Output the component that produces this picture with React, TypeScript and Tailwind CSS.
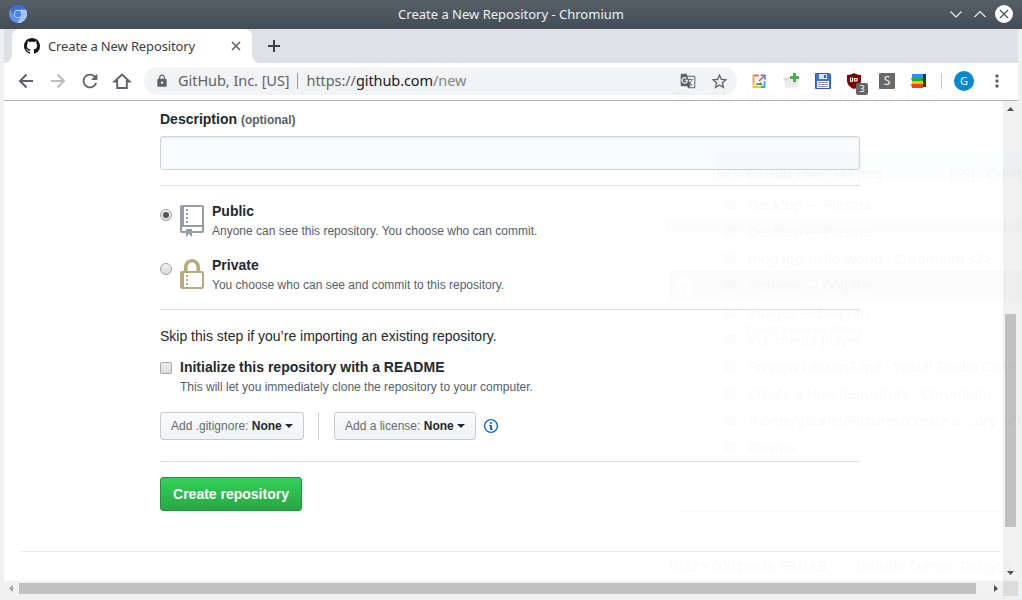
import React from "react";
import { MdRefresh, MdLock, MdStarBorder, MdMoreVert, MdGTranslate } from "react-icons/md";

const markPath =
  "M8 0C3.58 0 0 3.58 0 8c0 3.54 2.29 6.53 5.47 7.59.4.07.55-.17.55-.38 0-.19-.01-.82-.01-1.49-2.01.37-2.53-.49-2.69-.94-.09-.23-.48-.94-.82-1.13-.28-.15-.68-.52-.01-.53.63-.01 1.08.58 1.23.82.72 1.21 1.87.87 2.33.66.07-.52.28-.87.51-1.07-1.78-.2-3.64-.89-3.64-3.95 0-.87.31-1.59.82-2.15-.08-.2-.36-1.02.08-2.12 0 0 .67-.21 2.2.82.64-.18 1.32-.27 2-.27.68 0 1.36.09 2 .27 1.53-1.04 2.2-.82 2.2-.82.44 1.1.16 1.92.08 2.12.51.56.82 1.27.82 2.15 0 3.07-1.87 3.75-3.65 3.95.29.25.54.73.54 1.48 0 1.07-.01 1.93-.01 2.2 0 .21.15.46.55.38A8.013 8.013 0 0 0 16 8c0-4.42-3.58-8-8-8z";
const repoPath =
  "M4 9H3V8h1v1zm0-3H3v1h1V6zm0-2H3v1h1V4zm0-2H3v1h1V2zm8-1v12c0 .55-.45 1-1 1H6v2l-1.5-1.5L3 16v-2H1c-.55 0-1-.45-1-1V1c0-.55.45-1 1-1h10c.55 0 1 .45 1 1zm-1 10H1v2h2v-1h3v1h5v-2zm0-10H2v9h9V1z";
const lockPath =
  "M4 13H3v-1h1v1zm8-6v7c0 .55-.45 1-1 1H1c-.55 0-1-.45-1-1V7c0-.55.45-1 1-1h1V4c0-2.2 1.8-4 4-4s4 1.8 4 4v2h1c.55 0 1 .45 1 1zM3.8 6h4.41V4c0-1.22-.98-2.2-2.2-2.2-1.22 0-2.2.98-2.2 2.2v2H3.8zM11 7H2v7h9V7zM4 8H3v1h1V8zm0 2H3v1h1v-1z";
const infoPath =
  "M6.3 5.69a.942.942 0 0 1-.28-.7c0-.28.09-.52.28-.7.19-.18.42-.28.7-.28.28 0 .52.09.7.28.18.19.28.42.28.7 0 .28-.09.52-.28.7a1 1 0 0 1-.7.3c-.28 0-.52-.11-.7-.3zM8 7.99c-.02-.25-.11-.48-.31-.69-.2-.19-.42-.3-.69-.31H6c-.27.02-.48.13-.69.31-.2.2-.3.44-.31.69h1v3c.02.27.11.5.31.69.2.2.42.31.69.31h1c.27 0 .48-.11.69-.31.2-.19.3-.42.31-.69H8V7.98v.01zM7 2.3c-3.14 0-5.7 2.54-5.7 5.68 0 3.14 2.56 5.7 5.7 5.7s5.7-2.55 5.7-5.7c0-3.15-2.56-5.69-5.7-5.69v.01zM7 .98c3.86 0 7 3.14 7 7s-3.14 7-7 7-7-3.12-7-7 3.14-7 7-7z";

function TitleBar() {
  return (
    <header className="flex h-[29px] shrink-0 items-center bg-linear-to-b from-[#566069] to-[#444c54] pr-[9px] pb-px pl-[9px] text-[#eff0f1]">
      <svg width="18" height="18" viewBox="0 0 18 18">
        <circle cx="9" cy="9" r="9" fill="#5b93f5" />
        <path d="M1.200 4.500A9 9 0 0 1 16.800 4.600L9 4.800 5.200 10.600z" fill="#3e6fd0" />
        <path d="M16.900 4.800A9 9 0 0 1 8.200 18L12.700 10.600 11.500 4.800z" fill="#a5c6fb" />
        <circle cx="9" cy="8.900" r="4.100" fill="#c3d9fc" />
        <circle cx="9" cy="8.900" r="3.200" fill="#4a83ee" />
      </svg>
      <h1 className="flex-1 pl-[46px] text-center text-[13px] leading-[20px]">Create a New Repository - Chromium</h1>
      <svg width="64" height="18" viewBox="0 0 64 18" fill="none">
        <path d="M1.500 6.500l5.500 5.500 5.500-5.500M25.500 12l5.500-5.500 5.500 5.500" stroke="#eff0f1" strokeWidth="1.100" />
        <circle cx="55" cy="9" r="9" fill="#fcfcfc" />
        <path d="M51 5l8 8M59 5l-8 8" stroke="#475057" strokeWidth="1.200" />
      </svg>
    </header>
  );
}

function TabStrip() {
  return (
    <div className="flex h-[34px] shrink-0 bg-[#dee1e6]">
      <div className="w-[8px] bg-white">
        <div className="h-full rounded-br-[8px] bg-[#dee1e6]" />
      </div>
      <div className="flex w-[240px] items-center rounded-t-[8px] bg-white pl-[12px] pr-[11px]">
        <svg width="16" height="16" viewBox="0 0 16 16" fill="#191717">
          <path d={markPath} />
        </svg>
        <span className="mt-px ml-[8px] flex-1 whitespace-nowrap text-[13px] tracking-[-0.13px] text-[#3c4043]">Create a New Repository</span>
        <svg width="10" height="10" viewBox="0 0 10 10" stroke="#5f6368" strokeWidth="1.600">
          <path d="M1 1l8 8M9 1L1 9" />
        </svg>
      </div>
      <div className="w-[8px] bg-white">
        <div className="h-full rounded-bl-[8px] bg-[#dee1e6]" />
      </div>
      <svg className="mt-[11px] ml-[8px]" width="12" height="12" viewBox="0 0 12 12" stroke="#3c4043" strokeWidth="2">
        <path d="M6 0v12M0 6h12" />
      </svg>
    </div>
  );
}

function Extensions() {
  return (
    <div className="flex items-center gap-[16px]">
      <svg width="16" height="16" viewBox="0 0 16 16" fill="none" strokeWidth="1.800">
        <path d="M8 2.500H2.500" stroke="#ea6a5e" />
        <path d="M2.500 1.600V10" stroke="#f4a13d" />
        <path d="M2.500 9.500v4.500H7" stroke="#fbc02d" />
        <path d="M6 14h5" stroke="#e6c33a" />
        <path d="M10 14h3.500V8" stroke="#42a5e0" />
        <path d="M8 8l5-5" stroke="#ea5548" strokeWidth="1.600" />
        <path d="M9.500 2.300h4.500v4.500" stroke="#4285f4" strokeWidth="1.600" />
        <path d="M4.500 12l2-2.500 1.500 1 1.500-1.500 2.500 3z" fill="#34a853" />
      </svg>
      <svg width="16" height="16" viewBox="0 0 16 16">
        <path d="M1 6l4-2 10 3v7L2 15z" fill="#ebebeb" />
        <path d="M0 5l6-1v3l-5 1z" fill="#dcdcdc" />
        <path d="M11.500 0v9M7 4.500h9" stroke="#2c982d" strokeWidth="2.600" />
        <path d="M11.500 1v7M8 4.500h7" stroke="#4db548" strokeWidth="1" />
      </svg>
      <svg width="16" height="16" viewBox="0 0 16 16">
        <path d="M.5.500h14l1 1v14H.5z" fill="#3f75d1" stroke="#2f60b8" />
        <path d="M4 1h8v5H4z" fill="#dce6f4" />
        <path d="M9 2h2v3H9z" fill="#2f62bb" />
        <path d="M2 8h12v7H2z" fill="#fff" />
        <path d="M3 9.500h10M3 11.500h10M3 13.500h10" stroke="#8998aa" />
      </svg>
      <div className="relative size-[16px]">
        <svg width="16" height="16" viewBox="0 0 16 16">
          <path d="M7 0l2 1q2 1 5 1v5c0 4-2 7-7 9-5-2-7-5-7-9V2q3 0 5-1z" fill="#800000" />
          <path d="M3.500 4.500v3q0 1 1 1t1-1V4.500M7.500 8.500v-3h2.500v2.500h-2" stroke="#fff" fill="none" strokeWidth="1.200" />
        </svg>
        <span className="absolute left-[9px] top-[10px] flex h-[12px] w-[12px] items-center justify-center rounded-[2px] bg-[#666] text-[9.500px] leading-[12px] text-white">3</span>
      </div>
      <div className="flex size-[16px] items-center justify-center rounded-[1px] bg-[#696969] text-[12px] leading-[16px] text-[#eee]">S</div>
      <svg width="16" height="16" viewBox="0 0 16 16">
        <path d="M11 1h4v13h-4z" fill="#333" />
        <path d="M1 1h11v4H1z" fill="#2196f3" />
        <path d="M0 5h12v3H1z" fill="#1aaf3d" />
        <path d="M1 8h11v3H1z" fill="#ffc107" />
        <path d="M0 11h12v4H1z" fill="#f04415" />
      </svg>
    </div>
  );
}

function Toolbar() {
  return (
    <div className="flex h-[38px] shrink-0 items-center border-b border-[#b2b4b6] bg-white pb-px pl-[12px] text-[#5f6368]">
      <div className="flex items-center gap-[12px]">
        <svg width="20" height="20" viewBox="0 0 20 20" fill="none" stroke="#5f6368" strokeWidth="2">
          <path d="M17 10H4.500M10.500 3.500L4 10l6.500 6.500" />
        </svg>
        <svg width="20" height="20" viewBox="0 0 20 20" fill="none" stroke="#babcbe" strokeWidth="2">
          <path d="M3 10h12.500M9.500 3.500L16 10l-6.500 6.500" />
        </svg>
        <MdRefresh size={22} className="-mx-px" />
        <svg width="20" height="20" viewBox="0 0 20 20" fill="none" stroke="#5f6368" strokeWidth="1.900">
          <path d="M5.200 9v8h9.600V9M14.500 10.500h3L10 3.500 2.500 10.500h3" />
        </svg>
      </div>
      <div className="ml-[12px] flex h-[28px] w-[593px] items-center rounded-full bg-[#f1f3f4] pr-[8px] pl-[11px]">
        <MdLock size={14} />
        <span className="-mt-[2px] ml-[9px] whitespace-nowrap text-[14.500px] leading-[20px] tracking-[-0.05px]">GitHub, Inc. [US]</span>
        <span className="ml-[7px] h-[16px] w-px bg-[#96999c]" />
        <span className="-mt-[2px] ml-[9px] flex-1 whitespace-nowrap text-[14.500px] leading-[20px] tracking-[-0.08px]">
          https://<span className="text-[#202124]">github.com</span><span className="text-[#80868b]">/new</span>
        </span>
        <MdGTranslate size={16} className="mr-[14px]" />
        <MdStarBorder size={19} />
      </div>
      <div className="ml-[14px]">
        <Extensions />
      </div>
      <span className="ml-[14px] h-[16px] w-px bg-[#c5c8cc]" />
      <span className="ml-[12px] flex size-[20px] items-center justify-center rounded-full bg-[#0288d1] text-[11px] text-white">G</span>
      <MdMoreVert size={20} className="ml-[13px]" />
    </div>
  );
}

function Visibility({ checked, path, color, title, note }: { checked?: boolean; path: string; color: string; title: string; note: string }) {
  return (
    <label className="flex h-[54px] items-start">
      <span className="mt-[8px] flex size-[12px] items-center justify-center rounded-full border border-[#a3a3a3] bg-linear-to-b from-[#f1f1f1] to-[#dcdcdc]">
        {checked && <span className="size-[6px] rounded-full bg-[#555]" />}
      </span>
      <svg className="ml-[8px] mt-[4px]" width="24" height="32" viewBox="0 0 12 16" fill={color}>
        <path fillRule="evenodd" d={path} />
      </svg>
      <span className="ml-[8px] flex flex-col gap-px">
        <span className="text-[14px] font-bold leading-[20px]">{title}</span>
        <span className="text-[12px] leading-[18px] text-[#586069]">{note}</span>
      </span>
    </label>
  );
}

function SelectButton({ label, className }: { label: string; className: string }) {
  return (
    <button className={`flex h-[28px] items-center rounded-[3px] border border-[#c8cbce] bg-linear-to-b from-[#fafbfc] to-[#eff3f6] pl-[10px] text-[12px] whitespace-pre text-[#24292e] ${className}`}>
      <span className="text-[#646b73]">{label} </span>
      <b>None</b>
      <span className="ml-[3px] border-x-4 border-t-4 border-x-transparent border-t-[#24292e]" />
    </button>
  );
}

function Page() {
  return (
    <main className="h-full min-w-0 flex-1 bg-white pt-[8px] font-['Liberation_Sans',sans-serif] text-[#24292e]">
      <div className="ml-[156px] w-[700px]">
        <div className="text-[14px] font-bold leading-[20px]">
          Description <span className="text-[12px] text-[#586069]">(optional)</span>
        </div>
        <div className="mt-[6px] h-[34px] rounded-[3px] border border-[#d1d5da] bg-[#fafbfc] shadow-[inset_0_1px_2px_rgba(27,31,35,0.075)]" />
        <div className="mt-[15px] h-px bg-[#dfe2e5]" />
        <div className="h-[123px] pt-[15px]">
          <Visibility checked path={repoPath} color="#959da5" title="Public" note="Anyone can see this repository. You choose who can commit." />
          <Visibility path={lockPath} color="#b9a980" title="Private" note="You choose who can see and commit to this repository." />
        </div>
        <div className="h-px bg-[#dfe2e5]" />
        <p className="mt-[16px] text-[14px] leading-[20px]">Skip this step if you’re importing an existing repository.</p>
        <label className="mt-[11px] flex items-start">
          <span className="mt-[5px] size-[12px] rounded-[2px] border border-[#a9a9a9] bg-linear-to-b from-[#eee] to-[#dcdcdc]" />
          <span className="ml-[8px] flex flex-col gap-px">
            <span className="text-[14px] font-bold leading-[20px]">Initialize this repository with a README</span>
            <span className="text-[12px] leading-[18px] text-[#586069]">This will let you immediately clone the repository to your computer.</span>
          </span>
        </label>
        <div className="mt-[16px] flex items-center">
          <SelectButton label="Add .gitignore:" className="w-[144px]" />
          <span className="ml-[14px] mr-[15px] h-[28px] w-px bg-[#d1d5da]" />
          <SelectButton label="Add a license:" className="w-[142px]" />
          <svg className="ml-[8px]" width="14" height="16" viewBox="0 0 14 16" fill="#0366d6">
            <path fillRule="evenodd" d={infoPath} />
          </svg>
        </div>
        <div className="mt-[21px] h-px bg-[#dfe2e5]" />
        <button className="mt-[15px] flex h-[34px] w-[142px] items-center justify-center rounded-[3px] border border-[#26903d] bg-linear-to-b from-[#34d058] to-[#28a745] text-[14px] font-bold text-white">
          Create repository
        </button>
      </div>
      <div className="mt-[40px] ml-[16px] mr-[3px] h-px bg-[#eaecef]" />
    </main>
  );
}

const ghostRows = [
  { y: 205, t: "Desktop — Plasma" },
  { y: 232, t: "Desktop — Plasma" },
  { y: 259, t: "mogago/hello-world - Chromium <2>" },
  { y: 286, t: "Pictures — Dolphin" },
  { y: 313, t: "images — Dolphin" },
  { y: 340, t: "VLC media player" },
  { y: 367, t: "Preview Lesson3.md - Visual Studio Code" },
  { y: 394, t: "Create a New Repository - Chromium" },
  { y: 421, t: "/home/gabriel/Pictures/Create a ...ory - Chr" },
  { y: 448, t: "Plasma" },
];

/* Translucent remains of a fading window above the page. */
function FadingWindow() {
  return (
    <svg className="pointer-events-none absolute inset-0" width="1022" height="600" fontSize="14">
      <path d="M665 220h357v13H665zM669 270h353v31H669z" fillOpacity="0.01" />
      <path d="M717 152h305v26H717z" fill="#2a70c0" fillOpacity="0.012" />
      <g opacity="0.018">
        <text x="675" y="102">File</text>
        <text x="710" y="102">Edit</text>
        <text x="747" y="102">View</text>
        <text x="790" y="102" textLength="70">Screenshot</text>
        <text x="874" y="102">Go</text>
        <text x="906" y="102">Help</text>
        <text x="712" y="179" textLength="170">[58] - GitHub_user_243.png</text>
        <text x="950" y="179">[59] - Creat</text>
        {ghostRows.map((r) => (
          <g key={r.y}>
            <rect x="724" y={r.y - 6} width="12" height="11" fillOpacity="0.5" />
            <text x="748" y={r.y + 5}>{r.t}</text>
          </g>
        ))}
        <text x="746" y="333" fontSize="10.500">Create a new repository</text>
        <text x="667" y="571" textLength="160">1022 x 600 pixels, 99.0 KB</text>
        <text x="856" y="571">Include Cursor</text>
        <text x="960" y="571">Delay: 0</text>
        <path d="M677 510h326v2H677z" fillOpacity="0.5" />
      </g>
      <path d={markPath} transform="translate(676 278)" fill="#fff" />
    </svg>
  );
}

export default function App() {
  return (
    <div className="relative flex h-[600px] w-[1022px] flex-col overflow-hidden bg-[#eff0f1] font-['Noto_Sans',sans-serif]">
      <TitleBar />
      <div className="mx-[4px] flex flex-1 flex-col">
        <TabStrip />
        <Toolbar />
        <div className="flex h-[480px]">
          <Page />
          <div className="flex w-[15px] flex-col items-center bg-[#f1f1f1]">
            <svg width="15" height="15" viewBox="0 0 15 15" fill="#505050">
              <path d="M4 10h7L7.500 6z" />
            </svg>
            <div className="mt-[198px] h-[213px] w-[11px] bg-[#c1c1c1]" />
            <svg className="mt-auto" width="15" height="15" viewBox="0 0 15 15" fill="#505050">
              <path d="M4 5h7L7.500 9z" />
            </svg>
          </div>
        </div>
        <div className="flex h-[15px] items-center bg-[#f1f1f1]">
          <svg width="15" height="15" viewBox="0 0 15 15" fill="#a3a3a3">
            <path d="M9 4v7L5 7.500z" />
          </svg>
          <div className="h-[11px] w-[957px] bg-[#c1c1c1]" />
          <svg className="ml-auto" width="15" height="15" viewBox="0 0 15 15" fill="#505050">
            <path d="M6 4v7l4-3.500z" />
          </svg>
          <div className="size-[15px] bg-[#dcdcdc]" />
        </div>
      </div>
      <FadingWindow />
    </div>
  );
}
